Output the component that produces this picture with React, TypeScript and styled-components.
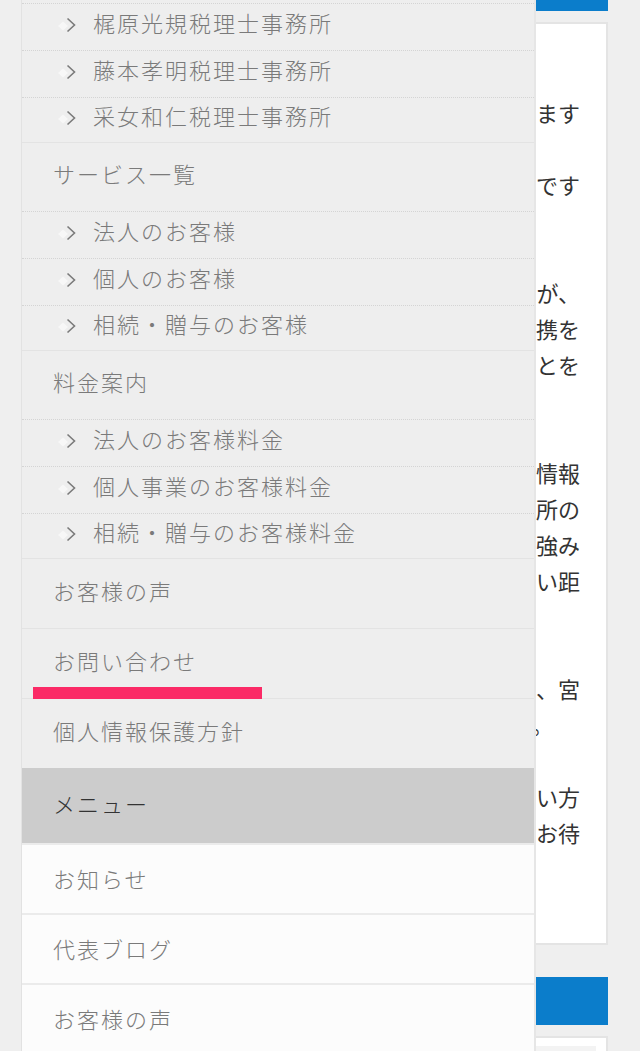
import React from "react";
import styled, { createGlobalStyle } from "styled-components";

const GlobalStyle = createGlobalStyle`
  html, body { margin: 0; padding: 0; background: #efefef; }
  body {
    font-family: "Noto Sans CJK JP", "Noto Sans", sans-serif;
    overflow: hidden;
  }
  *, *::before, *::after { box-sizing: border-box; }
  ul { list-style: none; margin: 0; padding: 0; }
`;

const Page = styled.div`
  position: relative;
  height: 1051px;
  overflow: hidden;
  background: #efefef;
`;

/* ---------- background content column ---------- */

const Main = styled.main`
  margin: 0 32px;
  display: flex;
  flex-direction: column;
`;

const HeadingBar = styled.div<{ $h: number; $mt?: number }>`
  height: ${(p) => p.$h}px;
  margin-top: ${(p) => p.$mt ?? 0}px;
  background: #0b7dcb;
`;

const Card = styled.section`
  margin-top: 11px;
  background: #ffffff;
  border: 2px solid #e4e4e4;
  padding: 70px 26px 21px 18px;
`;

const Line = styled.p<{ $inset?: number }>`
  margin: 0;
  height: 36px;
  line-height: 36px;
  font-size: 22px;
  color: #333333;
  white-space: nowrap;
  overflow: hidden;
  display: flex;
  justify-content: flex-end;
  padding-right: ${(p) => p.$inset ?? 0}px;
`;

const SmallCard = styled.section`
  margin-top: 11px;
  background: #ffffff;
  border: 2px solid #e4e4e4;
  padding: 8px 10px 0 10px;
  height: 120px;
`;

const Thumb = styled.div`
  height: 60px;
  background: #f3f3f3;
`;

/* ---------- overlay drawer ---------- */

const Drawer = styled.nav`
  position: absolute;
  top: 0;
  left: 21px;
  width: 515px;
  height: 100%;
  background: #eeeeee;
  border-left: 1px solid #e2e2e2;
  border-right: 2px solid #e6e6e6;
  overflow: hidden;
  font-size: 22px;
  line-height: 30px;
  letter-spacing: 2px;
  color: #7a7a7a;
  font-weight: 300;
`;

const MenuList = styled.ul`
  margin-top: 3px;
`;

const Item = styled.li`
  position: relative;
  border-bottom: 1px solid #e3e3e3;
  &:last-child {
    border-bottom: none;
  }
`;

const TopLink = styled.div<{ $h: number }>`
  display: flex;
  align-items: center;
  height: ${(p) => p.$h}px;
  padding-left: 31px;
  padding-bottom: 8px;
`;

const SubRow = styled.li`
  display: flex;
  align-items: center;
  gap: 16px;
  height: 47px;
  padding-left: 35px;
  padding-bottom: 10px;
  border-top: 1px dotted #d4d4d4;
  &:last-child {
    height: 45px;
  }
`;

const Chevron = styled.svg`
  flex: none;
  width: 20px;
  height: 16px;
  margin-top: 6px;
`;

const Marker = styled.span`
  position: absolute;
  left: 11px;
  top: 58px;
  width: 229px;
  height: 12px;
  background: #fb2a66;
  z-index: 1;
`;

const MenuHeading = styled.div`
  display: flex;
  align-items: center;
  height: 75px;
  padding-left: 31px;
  padding-bottom: 6px;
  background: #cccccc;
  color: #333333;
`;

const PlainRow = styled.li`
  display: flex;
  align-items: center;
  height: 70px;
  padding-left: 31px;
  padding-bottom: 3px;
  background: #fcfcfc;
  border-top: 2px solid #ebebeb;
`;

const ChevronIcon = () => (
  <Chevron viewBox="0 0 20 16" aria-hidden>
    <polygon points="1,9 6,4.5 11,9 6,13.5" fill="#f7f7f7" />
    <path d="M10.5 1.5 L17.5 8 L10.5 14.5" fill="none" stroke="#7a7a7a" strokeWidth="1.6" />
  </Chevron>
);

type Group = { title?: string; subs: string[] };

const groups: Group[] = [
  { subs: ["梶原光規税理士事務所", "藤本孝明税理士事務所", "采女和仁税理士事務所"] },
  { title: "サービス一覧", subs: ["法人のお客様", "個人のお客様", "相続・贈与のお客様"] },
  { title: "料金案内", subs: ["法人のお客様料金", "個人事業のお客様料金", "相続・贈与のお客様料金"] },
];

/* visible tails of the article text that peek out beside the drawer */
const lines: { text: string; inset?: number }[] = [
  { text: "ます" },
  { text: "" },
  { text: "です" },
  { text: "" },
  { text: "" },
  { text: "が、" },
  { text: "携を" },
  { text: "とを" },
  { text: "" },
  { text: "" },
  { text: "情報" },
  { text: "所の" },
  { text: "強み" },
  { text: "い距" },
  { text: "" },
  { text: "" },
  { text: "、宮" },
  { text: "。", inset: 27 },
  { text: "" },
  { text: "い方" },
  { text: "お待" },
  { text: "" },
  { text: "" },
];

export default function App() {
  return (
    <>
      <GlobalStyle />
      <Page>
        <Main>
          <HeadingBar $h={11} />
          <Card>
            {lines.map((l, i) => (
              <Line key={i} $inset={l.inset}>
                {l.text}
              </Line>
            ))}
          </Card>
          <HeadingBar $h={48} $mt={32} />
          <SmallCard>
            <Thumb />
          </SmallCard>
        </Main>

        <Drawer>
          <MenuList>
            {groups.map((g, gi) => (
              <Item key={gi}>
                {g.title && <TopLink $h={68}>{g.title}</TopLink>}
                <ul>
                  {g.subs.map((s) => (
                    <SubRow key={s}>
                      <ChevronIcon />
                      <span>{s}</span>
                    </SubRow>
                  ))}
                </ul>
              </Item>
            ))}
            <Item>
              <TopLink $h={69}>お客様の声</TopLink>
            </Item>
            <Item>
              <TopLink $h={69}>お問い合わせ</TopLink>
              <Marker />
            </Item>
            <Item>
              <TopLink $h={69}>個人情報保護方針</TopLink>
            </Item>
          </MenuList>
          <MenuHeading>メニュー</MenuHeading>
          <ul>
            <PlainRow>お知らせ</PlainRow>
            <PlainRow>代表ブログ</PlainRow>
            <PlainRow>お客様の声</PlainRow>
          </ul>
        </Drawer>
      </Page>
    </>
  );
}
